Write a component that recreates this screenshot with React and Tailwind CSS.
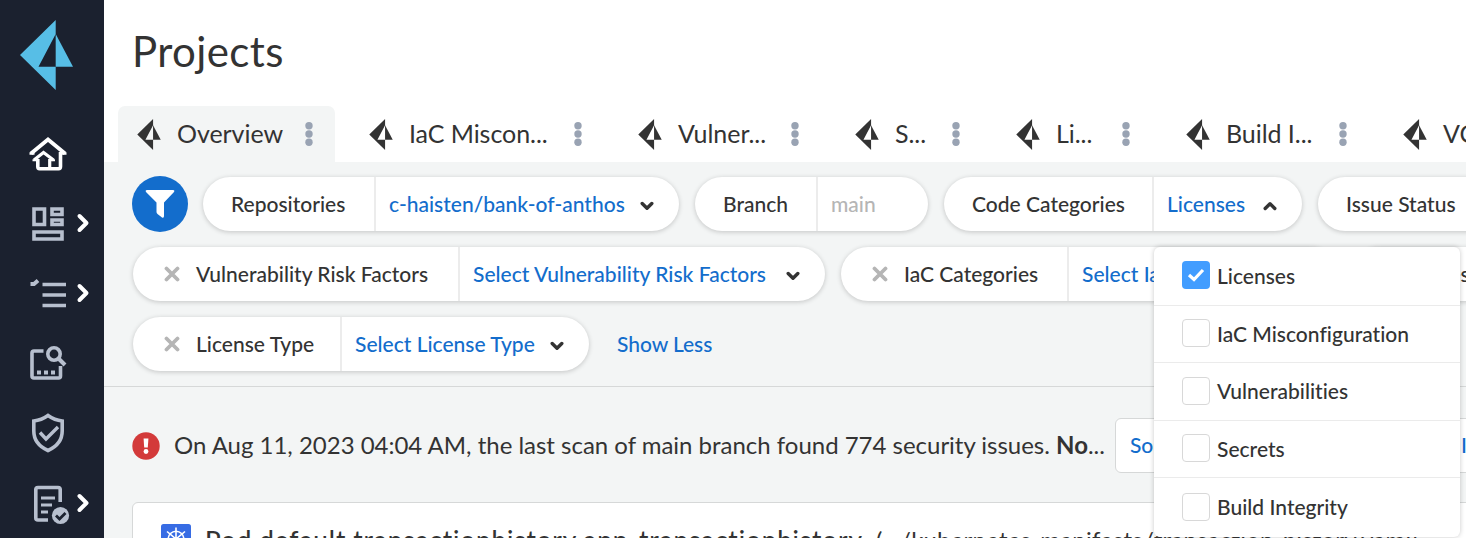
import React from "react";

function PrismaMark({ className }) {
  return (
    <svg viewBox="20 20 53 70" className={className} fill="currentColor">
      <path fillRule="evenodd" d="M20 55 55.7 20V90ZM38.5 66.7H55.7V34Z" />
      <path d="M55.7 34 73 66.7H55.7Z" />
    </svg>
  );
}

function NavItem({ arrow, children }) {
  return (
    <div className="flex h-[70px] w-[104px] shrink-0">
      <svg width="104" height="70" viewBox="0 0 104 70" fill="none" stroke="#b7bfce" strokeWidth="3.6">
        {children}
        {arrow && <path d="M79.5 28 86.5 35 79.5 42" stroke="#fff" strokeWidth="4" strokeLinecap="round" strokeLinejoin="round" />}
      </svg>
    </div>
  );
}

function Sidebar() {
  return (
    <aside className="flex h-full w-[104px] shrink-0 flex-col overflow-hidden bg-[#1b212f]">
      <div className="flex h-[118px] shrink-0 pl-5 pt-5">
        <PrismaMark className="h-[70px] w-[53px] text-[#57bee6]" />
      </div>
      <NavItem>
        <g stroke="#fff">
          <path d="M31 35.5 48 21.500 65 35.5" strokeWidth="3.800" />
          <path d="M29.5 35.5h5M61.500 35.5h5" strokeWidth="2.500" />
          <path d="M60.500 34V48.500Q60.500 50.700 58.500 50.700H39.500Q37.800 50.700 37.800 48.500V41" strokeWidth="3.600" />
          <path d="M34 42 43.500 34.500 53.500 42" strokeWidth="3.200" />
          <path d="M32.500 42.300h4M51 42.300h4" strokeWidth="2" />
          <path d="M49.700 41V51" strokeWidth="3.200" />
        </g>
      </NavItem>
      <NavItem arrow>
        <path d="M34 21h10.500v15.500H34zM52 21h10v5.500H52zM52 32h10v4.500H52zM34 44h28v7H34z" strokeWidth="3.600" />
      </NavItem>
      <NavItem arrow>
        <path d="M42.500 26.500h23.500M42.500 37h23.500M42.500 47.500h23.500" />
        <path d="M30.500 26h3.500l4-3.500" strokeWidth="4" />
      </NavItem>
      <NavItem>
        <path d="M43.500 23H34Q32 23 32 25V48Q32 50 34 50H58.500Q60.500 50 60.500 48V38" />
        <circle cx="54" cy="26" r="6.200" />
        <path d="M58 30 65 37" strokeWidth="4" />
        <path d="M37 44.500h4M44 44.500h4M51 44.500h4" strokeWidth="4" />
      </NavItem>
      <NavItem>
        <path d="M48 17.500C43 21 38 22.500 33.800 23V33C33.800 42 39 48.500 48 52.500C57 48.500 62.200 42 62.200 33V23C58 22.500 53 21 48 17.500Z" />
        <path d="M40 34.500 46 41 58 29" strokeWidth="3.400" />
      </NavItem>
      <NavItem arrow>
        <path d="M48 52H38Q35.800 52 35.800 50V21.500Q35.800 19.500 38 19.500H58Q60.200 19.500 60.200 21.500V34" />
        <path d="M41 30h14M41 37h11M41 44h7" strokeWidth="3" />
        <circle cx="60.500" cy="47.500" r="8.600" fill="#b7bfce" stroke="none" />
        <path d="M56 47.500 59.500 51 65.500 45" stroke="#1b212f" strokeWidth="2.800" />
      </NavItem>
    </aside>
  );
}

function Tab({ label, width, active }) {
  return (
    <div className={"flex h-14 shrink-0 items-center rounded-t-[7px] pl-[19px] pr-[22px] " + width + (active ? " bg-[#f3f5f5]" : "")}>
      <PrismaMark className="h-[31px] w-[24px] shrink-0 text-[#333]" />
      <span className="ml-4 flex-1 whitespace-nowrap text-[25px] tracking-[-0.05px]">{label}</span>
      <svg width="8" height="24" viewBox="0 0 8 24" fill="#99a3b3" className="shrink-0">
        <circle cx="4" cy="3.800" r="3.700" />
        <circle cx="4" cy="12" r="3.700" />
        <circle cx="4" cy="20.200" r="3.700" />
      </svg>
    </div>
  );
}

function Chevron({ up }) {
  return (
    <svg width="14" height="10" viewBox="0 0 14 10" className="mt-[4px] shrink-0" fill="none" stroke="#333" strokeWidth="3.400" strokeLinecap="round" strokeLinejoin="round">
      <path d={up ? "M2.200 7.500 7 2.700 11.800 7.500" : "M2.200 2.500 7 7.300 11.800 2.500"} />
    </svg>
  );
}

function Cross() {
  return (
    <svg width="16" height="16" viewBox="0 0 16 16" className="mr-4 shrink-0" stroke="#b5b5b5" strokeWidth="3.800" strokeLinecap="round">
      <path d="M2.500 2.500 13.500 13.500M13.500 2.500 2.500 13.500" />
    </svg>
  );
}

function Pill({ label, value, labelWidth, valueWidth, removable, placeholder, up, children }) {
  return (
    <div className="relative flex h-[54px] shrink-0 whitespace-nowrap rounded-full bg-white text-[21px] font-medium tracking-[0.01px] shadow-[0_1px_5px_rgba(0,0,0,0.2)]">
      <div className={"flex items-center border-r-2 border-[#ececec] " + (removable ? "pl-[31px] " : "pl-[28px] ") + labelWidth}>
        {removable && <Cross />}
        <span className="pb-px">{label}</span>
      </div>
      <div className={"relative flex items-center justify-between pl-[13px] pr-[25px] " + valueWidth + (placeholder ? " text-[#b5b5b5]" : " text-[#136dcc]")}>
        <span className="pb-px">{value}</span>
        {!placeholder && <Chevron up={up} />}
        {children}
      </div>
    </div>
  );
}

const options = ["Licenses", "IaC Misconfiguration", "Vulnerabilities", "Secrets", "Build Integrity"];

function CategoryMenu() {
  return (
    <div className="absolute left-0 top-[70px] z-10 flex h-[290px] w-[306px] flex-col rounded-[6px] bg-white pb-px text-[#333] shadow-[0_0_5px_rgba(0,0,0,0.22)]">
      {options.map((name, i) => (
        <div key={name} className={"flex items-center pl-7 " + (i ? "border-t border-[#ebebeb] " : "") + (i === 4 ? "h-[59px]" : "h-[57.600px] pb-px")}>
          {i === 0 ? (
            <span className="flex size-7 items-center justify-center rounded-[4px] bg-[#429dff]">
              <svg width="18" height="14" viewBox="0 0 18 14" fill="none" stroke="#fff" strokeWidth="3.200">
                <path d="M2 7 7 11.500 16 2" />
              </svg>
            </span>
          ) : (
            <span className="size-7 rounded-[4px] border border-[#d8d8d8] bg-white" />
          )}
          <span className="ml-[7px]">{name}</span>
        </div>
      ))}
    </div>
  );
}

function Kubernetes() {
  return (
    <svg width="30" height="30" viewBox="0 0 30 30" className="shrink-0">
      <rect width="30" height="30" rx="2.500" fill="#376ce4" />
      <g fill="none" stroke="#fff" strokeWidth="1.600">
        <circle cx="15" cy="15" r="7.800" />
        <path d="M15 3.500V26M6 7.500 24 22.500M24 7.500 6 22.500M4 16 26 16" />
      </g>
    </svg>
  );
}

export default function App() {
  return (
    <div className="flex h-[538px] w-[1466px] overflow-hidden bg-white font-['Lato',sans-serif] text-[#333]">
      <Sidebar />
      <main className="flex min-w-0 flex-1 flex-col overflow-hidden">
        <h1 className="h-[106px] shrink-0 pl-[28px] pt-[26px] text-[42px] leading-[50px] tracking-[0.4px]">Projects</h1>
        <nav className="flex h-14 shrink-0 gap-[15px] pl-[14px]">
          <Tab label="Overview" width="w-[217px]" active />
          <Tab label="IaC Miscon..." width="w-[254px]" />
          <Tab label="Vulner..." width="w-[202px]" />
          <Tab label="S..." width="w-[146px]" />
          <Tab label="Li..." width="w-[155px]" />
          <Tab label="Build I..." width="w-[202px]" />
          <Tab label="VCS" width="w-[202px]" />
        </nav>
        <section className="flex h-[225px] shrink-0 flex-col gap-4 border-b border-[#d6d8d8] bg-[#f3f5f5] pl-[29px] pt-[15px]">
          <div className="relative z-10 flex h-[54px] items-center gap-4">
            <div className="-ml-px -mr-px flex size-14 shrink-0 items-center justify-center rounded-full bg-[#136dcc]">
              <svg width="30" height="30" viewBox="0 0 30 30" fill="#fff">
                <path d="M2 1H28Q30 1 29 3L19 13.500V27Q19 29.500 17 28.500L12.500 25Q11.500 24.200 11.500 23V13.500L1 3Q0 1 2 1Z" />
              </svg>
            </div>
            <Pill label="Repositories" labelWidth="w-[173px]" value="c-haisten/bank-of-anthos" valueWidth="w-[303px]" />
            <Pill label="Branch" labelWidth="w-[123px]" value="main" valueWidth="w-[110px]" placeholder />
            <Pill label="Code Categories" labelWidth="w-[210px]" value="Licenses" valueWidth="w-[148px]" up>
              <CategoryMenu />
            </Pill>
            <Pill label="Issue Status" labelWidth="w-[170px]" value="Open" valueWidth="w-[160px]" />
          </div>
          <div className="flex gap-4">
            <Pill removable label="Vulnerability Risk Factors" labelWidth="w-[327px]" value="Select Vulnerability Risk Factors" valueWidth="w-[365px]" />
            <Pill removable label="IaC Categories" labelWidth="w-[228px]" value="Select IaC Categories" valueWidth="w-[268px]" />
            <Pill removable label="Types" labelWidth="w-[210px]" value="Select" valueWidth="w-[200px]" />
          </div>
          <div className="flex items-center gap-7">
            <Pill removable label="License Type" labelWidth="w-[209px]" value="Select License Type" valueWidth="w-[247px]" />
            <span className="pb-px text-[21px] font-medium tracking-[-0.05px] text-[#136dcc]">Show Less</span>
          </div>
        </section>
        <section className="flex min-h-0 flex-1 flex-col bg-[#f3f5f5] pl-7">
          <div className="flex h-[115px] shrink-0 items-center whitespace-nowrap pt-[2px]">
            <svg width="28" height="28" viewBox="0 0 28 28" className="shrink-0" fill="#fff">
              <circle cx="14" cy="14" r="13.700" fill="#d33a3a" />
              <path d="M11.600 6.500h4.800l-.6 9h-3.600z" />
              <circle cx="14" cy="19.500" r="2.400" />
            </svg>
            <p className="ml-[14px] w-[941px] shrink-0 pb-[2px] text-[24px] tracking-[-0.015px]">
              On Aug 11, 2023 04:04 AM, the last scan of main branch found 774 security issues. <b>No</b>...
            </p>
            <div className="flex h-[55px] w-[420px] shrink-0 items-center rounded-[6px] border border-[#d6d8d8] bg-white pb-px pl-[14px] text-[21px] font-medium text-[#136dcc]">
              <span className="w-[331px]">Sort by</span>
              <span>Issues</span>
            </div>
          </div>
          <div className="flex h-[120px] w-[1400px] shrink-0 items-start whitespace-nowrap rounded-[6px] border border-[#d6d8d8] bg-white pl-7 pt-[21px]">
            <Kubernetes />
            <span className="ml-[14px] text-[26px] font-medium leading-[32px] tracking-[0.92px]">Pod.default.transactionhistory.app-transactionhistory</span>
            <span className="ml-[13px] text-[24px] leading-[32px] tracking-[0.2px]">(.../kubernetes-manifests/transaction-history.yaml)</span>
          </div>
        </section>
      </main>
    </div>
  );
}
